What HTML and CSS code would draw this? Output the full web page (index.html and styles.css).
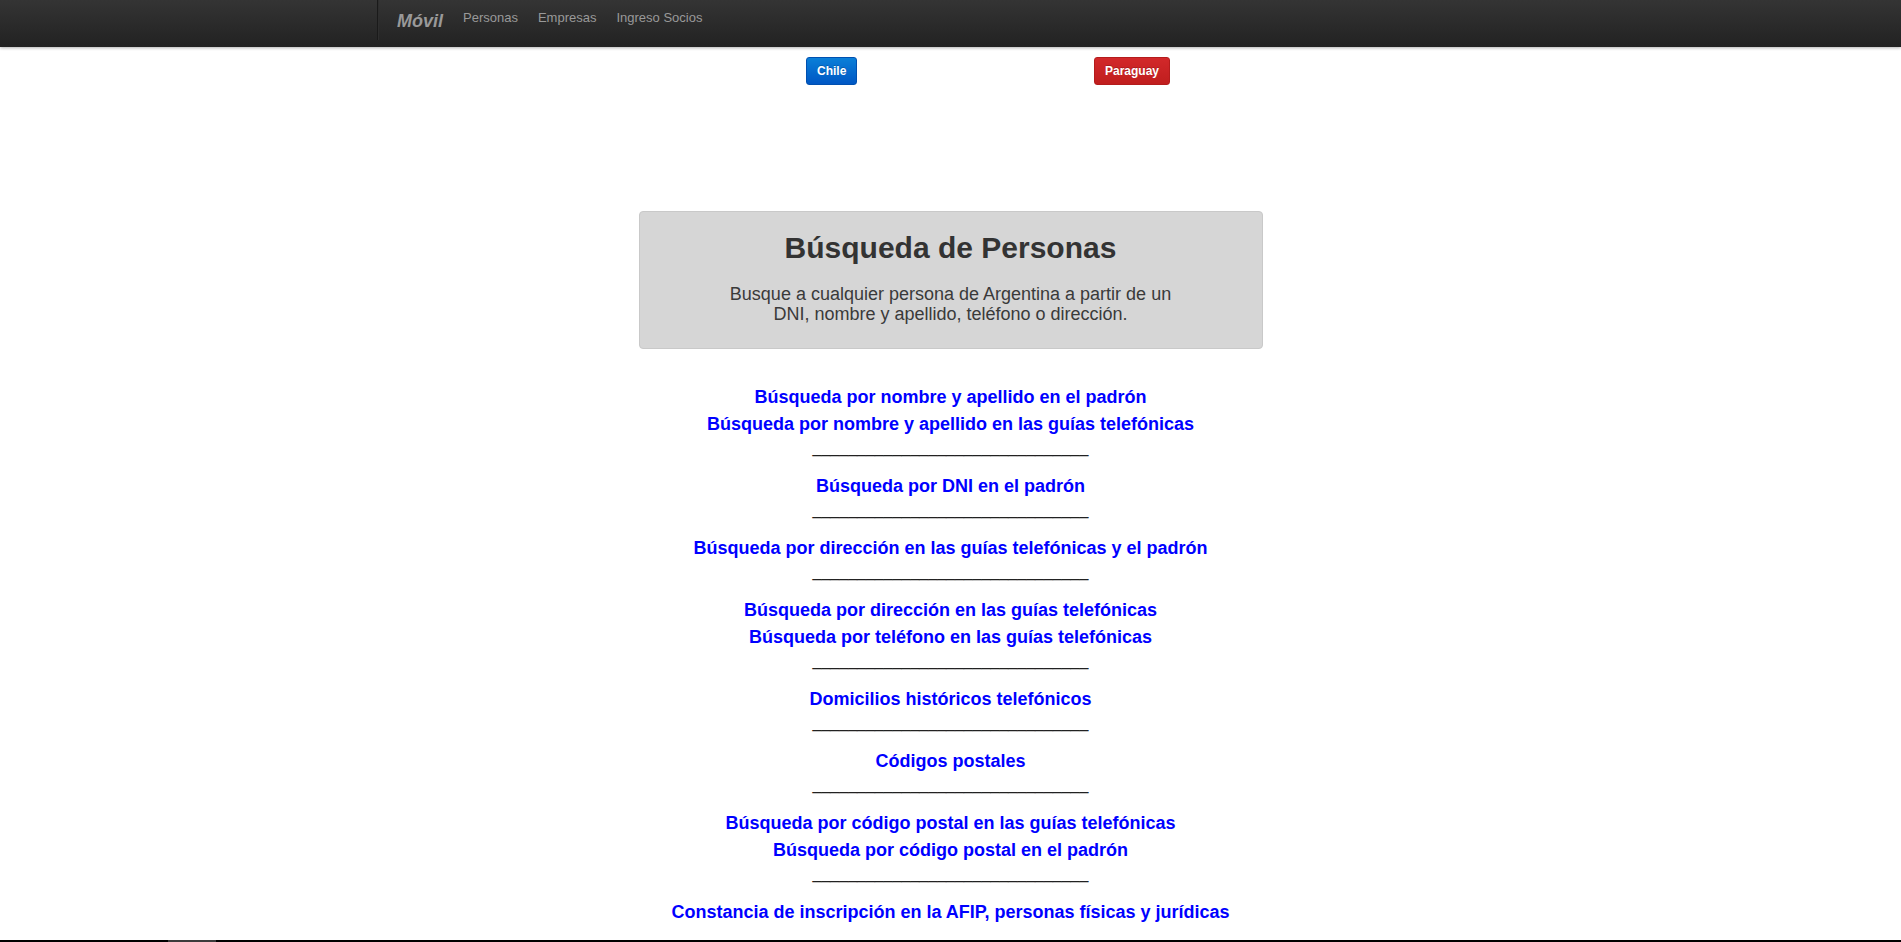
FILE: index.html
```html
<!DOCTYPE html>
<html lang="es">
<head>
<meta charset="utf-8">
<title>Búsqueda de Personas</title>
<link rel="stylesheet" href="styles.css">
</head>
<body>
<header class="navbar">
  <div class="nav-container">
    <div class="nav-divider"></div>
    <a class="brand" href="#">Móvil</a>
    <nav class="nav-links">
      <a href="#">Personas</a>
      <a href="#">Empresas</a>
      <a href="#">Ingreso Socios</a>
    </nav>
  </div>
</header>

<div class="flags">
  <a class="btn btn-chile" href="#">Chile</a>
  <a class="btn btn-paraguay" href="#">Paraguay</a>
</div>

<section class="hero">
  <h1 class="hero-title">Búsqueda de Personas</h1>
  <p class="hero-text">Busque a cualquier persona de Argentina a partir de un<br>DNI, nombre y apellido, teléfono o dirección.</p>
</section>

<main class="links">
  <a class="link" href="#">Búsqueda por nombre y apellido en el padrón</a>
  <a class="link" href="#">Búsqueda por nombre y apellido en las guías telefónicas</a>
  <div class="sep">_______________________________</div>
  <a class="link" href="#">Búsqueda por DNI en el padrón</a>
  <div class="sep">_______________________________</div>
  <a class="link" href="#">Búsqueda por dirección en las guías telefónicas y el padrón</a>
  <div class="sep">_______________________________</div>
  <a class="link" href="#">Búsqueda por dirección en las guías telefónicas</a>
  <a class="link" href="#">Búsqueda por teléfono en las guías telefónicas</a>
  <div class="sep">_______________________________</div>
  <a class="link" href="#">Domicilios históricos telefónicos</a>
  <div class="sep">_______________________________</div>
  <a class="link" href="#">Códigos postales</a>
  <div class="sep">_______________________________</div>
  <a class="link" href="#">Búsqueda por código postal en las guías telefónicas</a>
  <a class="link" href="#">Búsqueda por código postal en el padrón</a>
  <div class="sep">_______________________________</div>
  <a class="link" href="#">Constancia de inscripción en la AFIP, personas físicas y jurídicas</a>
</main>

<div class="bottom-bar"><span class="bottom-thumb"></span></div>
</body>
</html>
```

FILE: styles.css
```css
html, body {
  margin: 0;
  padding: 0;
}

body {
  font-family: "Liberation Sans", Arial, sans-serif;
  background: #ffffff;
  color: #333333;
}

a {
  text-decoration: none;
}

/* Navbar */
.navbar {
  height: 47px;
  background: linear-gradient(to bottom, #343434 0%, #222222 100%);
  box-shadow: 0 1px 3px rgba(0, 0, 0, 0.3);
}

.nav-container {
  width: 1147px;
  margin: 0 auto;
  display: flex;
  align-items: flex-start;
  height: 47px;
}

.nav-divider {
  width: 1px;
  height: 40px;
  background: #1a1a1a;
  box-shadow: 1px 0 0 #2e2e2e;
}

.brand {
  margin-left: 19px;
  padding-top: 11px;
  font-size: 18px;
  line-height: 20px;
  font-weight: bold;
  font-style: italic;
  color: #999999;
}

.nav-links {
  display: flex;
  gap: 20px;
  margin-left: 20px;
  padding-top: 8px;
}

.nav-links a {
  font-size: 13px;
  line-height: 20px;
  color: #999999;
}

/* Country buttons */
.flags {
  display: flex;
  justify-content: space-between;
  width: 364px;
  margin-top: 10px;
  margin-left: calc(50% - 144.5px);
}

.btn {
  display: inline-block;
  box-sizing: border-box;
  height: 28px;
  padding: 0 10px;
  border-radius: 3px;
  font-size: 12px;
  font-weight: bold;
  line-height: 26px;
  color: #ffffff;
  text-shadow: 0 -1px 0 rgba(0, 0, 0, 0.2);
}

.btn-chile {
  background: linear-gradient(to bottom, #0a7fd8 0%, #0057c4 100%);
  border: 1px solid #0050b0;
}

.btn-paraguay {
  background: linear-gradient(to bottom, #d2282a 0%, #c01e1e 100%);
  border: 1px solid #b41c1c;
}

/* Hero */
.hero {
  box-sizing: border-box;
  width: 624px;
  margin: 126px auto 0;
  padding: 18px 20px 24px;
  background: #d6d6d6;
  border: 1px solid #c9c9c9;
  border-radius: 4px;
  text-align: center;
}

.hero-title {
  margin: 0;
  font-size: 30px;
  line-height: 36px;
  font-weight: bold;
  color: #333333;
}

.hero-text {
  margin: 18px 0 0;
  font-size: 18px;
  line-height: 20px;
  color: #3a3a3a;
}

/* Links */
.links {
  display: flex;
  flex-direction: column;
  align-items: center;
  margin-top: 33px;
  padding-bottom: 40px;
}

.link {
  box-sizing: border-box;
  height: 27px;
  padding-top: 4px;
  font-size: 18px;
  line-height: 23px;
  font-weight: bold;
  color: #0000ff;
}

.sep {
  box-sizing: border-box;
  height: 35px;
  padding-top: 4px;
  font-size: 16px;
  line-height: 16px;
  color: #222222;
}

/* Bottom bar */
.bottom-bar {
  position: fixed;
  left: 0;
  right: 0;
  bottom: 0;
  height: 2px;
  background: #000000;
}

.bottom-thumb {
  position: absolute;
  left: 168px;
  top: 0;
  width: 48px;
  height: 2px;
  background: #3c3c3c;
}
```
